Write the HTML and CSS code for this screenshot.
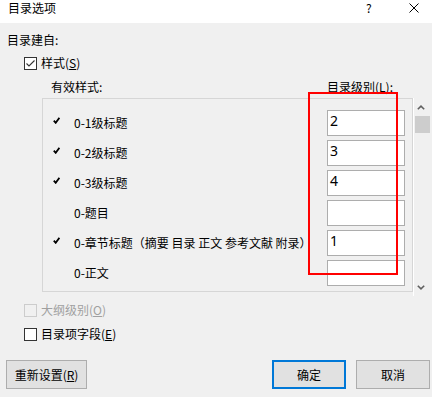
FILE: index.html
```html
<!DOCTYPE html>
<html lang="zh-CN">
<head>
<meta charset="utf-8">
<title>目录选项</title>
<link rel="stylesheet" href="styles.css">
</head>
<body>
<div class="dialog">
  <div class="titlebar">
    <span class="title">目录选项</span>
    <span class="help">?</span>
    <svg class="close" width="10" height="10" viewBox="0 0 10 10"><path d="M0.5 0.5 L9.5 9.5 M9.5 0.5 L0.5 9.5" stroke="#000" stroke-width="1" fill="none"/></svg>
  </div>

  <div class="content">
    <div class="label">目录建自:</div>

    <div class="check-row opt-styles">
      <span class="box"><svg width="11" height="11" viewBox="0 0 11 11"><path d="M1.5 5.5 L4 8 L9.5 2.5" stroke="#333" stroke-width="1.1" fill="none"/></svg></span>
      <span>样式(<u>S</u>)</span>
    </div>

    <div class="styles">
      <div class="styles-head">
        <span class="col-name">有效样式:</span>
        <span>目录级别(<u>L</u>):</span>
      </div>
      <div class="list-area">
        <div class="listbox">
          <div class="row"><span class="tick"><svg width="7" height="7" viewBox="0 0 7 7"><path d="M0.8 3.6 L2.7 5.8 L6.4 0.8" stroke="#000" stroke-width="1.8" fill="none"/></svg></span><span class="name">0-1级标题</span><span class="level">2</span></div>
          <div class="row"><span class="tick"><svg width="7" height="7" viewBox="0 0 7 7"><path d="M0.8 3.6 L2.7 5.8 L6.4 0.8" stroke="#000" stroke-width="1.8" fill="none"/></svg></span><span class="name">0-2级标题</span><span class="level">3</span></div>
          <div class="row"><span class="tick"><svg width="7" height="7" viewBox="0 0 7 7"><path d="M0.8 3.6 L2.7 5.8 L6.4 0.8" stroke="#000" stroke-width="1.8" fill="none"/></svg></span><span class="name">0-3级标题</span><span class="level">4</span></div>
          <div class="row"><span class="tick"></span><span class="name">0-题目</span><span class="level"></span></div>
          <div class="row"><span class="tick"><svg width="7" height="7" viewBox="0 0 7 7"><path d="M0.8 3.6 L2.7 5.8 L6.4 0.8" stroke="#000" stroke-width="1.8" fill="none"/></svg></span><span class="name">0-章节标题（摘要 目录 正文 参考文献 附录）</span><span class="level">1</span></div>
          <div class="row"><span class="tick"></span><span class="name">0-正文</span><span class="level"></span></div>
        </div>
        <div class="scrollbar">
          <div class="sb-up"><svg width="8" height="5" viewBox="0 0 8 5"><path d="M0.8 4.3 L4 1.2 L7.2 4.3" stroke="#606060" stroke-width="1.6" fill="none"/></svg></div>
          <div class="sb-thumb"></div>
          <div class="sb-track"></div>
          <div class="sb-down"><svg width="8" height="5" viewBox="0 0 8 5"><path d="M0.8 0.7 L4 3.8 L7.2 0.7" stroke="#606060" stroke-width="1.6" fill="none"/></svg></div>
        </div>
      </div>
    </div>

    <div class="check-row disabled opt-outline">
      <span class="box"></span>
      <span>大纲级别(<u>O</u>)</span>
    </div>
    <div class="check-row opt-field">
      <span class="box"></span>
      <span>目录项字段(<u>E</u>)</span>
    </div>
  </div>

  <div class="buttons">
    <button class="btn reset">重新设置(<u>R</u>)</button>
    <button class="btn ok">确定</button>
    <button class="btn cancel">取消</button>
  </div>

  <div class="highlight"></div>
</div>
</body>
</html>
```

FILE: styles.css
```css
body {
  margin: 0;
  font-family: "Noto Sans CJK SC", "Noto Sans", sans-serif;
  font-size: 12px;
  color: #000;
}

.dialog {
  width: 432px;
  height: 397px;
  background: #f0f0f0;
  position: relative;
  overflow: hidden;
}

.titlebar {
  height: 23px;
  background: #fff;
  display: flex;
  align-items: flex-start;
  line-height: 16px;
  padding: 0 13px 0 8px;
}

.help {
  margin-left: auto;
  width: 6px;
}

.close {
  margin-left: 37px;
  margin-top: 3px;
}

.content {
  padding-left: 7px;
}

.label {
  margin-top: 9px;
  line-height: 16px;
}

.check-row {
  display: flex;
  align-items: center;
  gap: 4px;
  margin-left: 17px;
  height: 16px;
  line-height: 16px;
}

.opt-styles { margin-top: 7px; }
.opt-outline { margin-top: 6px; }
.opt-field { margin-top: 8px; }

.box {
  width: 13px;
  height: 13px;
  border: 1px solid #333;
  box-sizing: border-box;
  background: #fff;
  display: flex;
  align-items: center;
  justify-content: center;
}

.disabled { color: #a0a0a0; }
.disabled .box {
  border-color: #cccccc;
  background: transparent;
}

.styles {
  margin-left: 35px;
  margin-top: 8px;
}

.styles-head {
  display: flex;
  line-height: 16px;
  padding-left: 9px;
}

.col-name { width: 276px; }

.list-area {
  display: flex;
  align-items: flex-start;
  margin-top: 3px;
}

.listbox {
  width: 371px;
  box-sizing: border-box;
  border: 1px solid #d6d6d6;
  padding: 9px 0 3px;
}

.row {
  display: grid;
  grid-template-columns: 21px 253px 78px;
  padding: 0 7px 0 10px;
  height: 30px;
  align-items: center;
}

.tick {
  height: 7px;
  margin-bottom: 6px;
  display: flex;
}

.name {
  white-space: nowrap;
  line-height: 16px;
}

.level {
  height: 26px;
  box-sizing: border-box;
  border: 1px solid #adadad;
  background: #fff;
  font-family: "Noto Sans", sans-serif;
  font-size: 14px;
  line-height: 20px;
  padding-left: 2px;
}

.scrollbar {
  width: 19px;
  height: 198px;
  box-sizing: border-box;
  border-left: 1px solid #fff;
  display: flex;
  flex-direction: column;
}

.sb-up {
  height: 18px;
  display: flex;
  justify-content: center;
  padding: 7px 4px 0 0;
  box-sizing: border-box;
}

.sb-thumb {
  height: 17px;
  width: 15px;
  margin-left: 1px;
  background: #cdcdcd;
}

.sb-track { flex: 1; }

.sb-down {
  height: 11px;
  display: flex;
  justify-content: center;
  padding-right: 4px;
}

.buttons {
  display: flex;
  padding: 0 2px 0 6px;
  margin-top: 18px;
}

.btn {
  height: 29px;
  box-sizing: border-box;
  border: 1px solid #adadad;
  background: #e1e1e1;
  font: inherit;
  color: #000;
  padding: 0;
  display: flex;
  align-items: center;
  justify-content: center;
}

.reset { width: 81px; }

.ok {
  width: 74px;
  margin-left: auto;
  border: 2px solid #0078d7;
}

.cancel {
  width: 74px;
  margin-left: 10px;
}

.highlight {
  position: absolute;
  left: 308px;
  top: 92px;
  width: 90px;
  height: 183px;
  box-sizing: border-box;
  border: 2px solid #ff0000;
}
```
